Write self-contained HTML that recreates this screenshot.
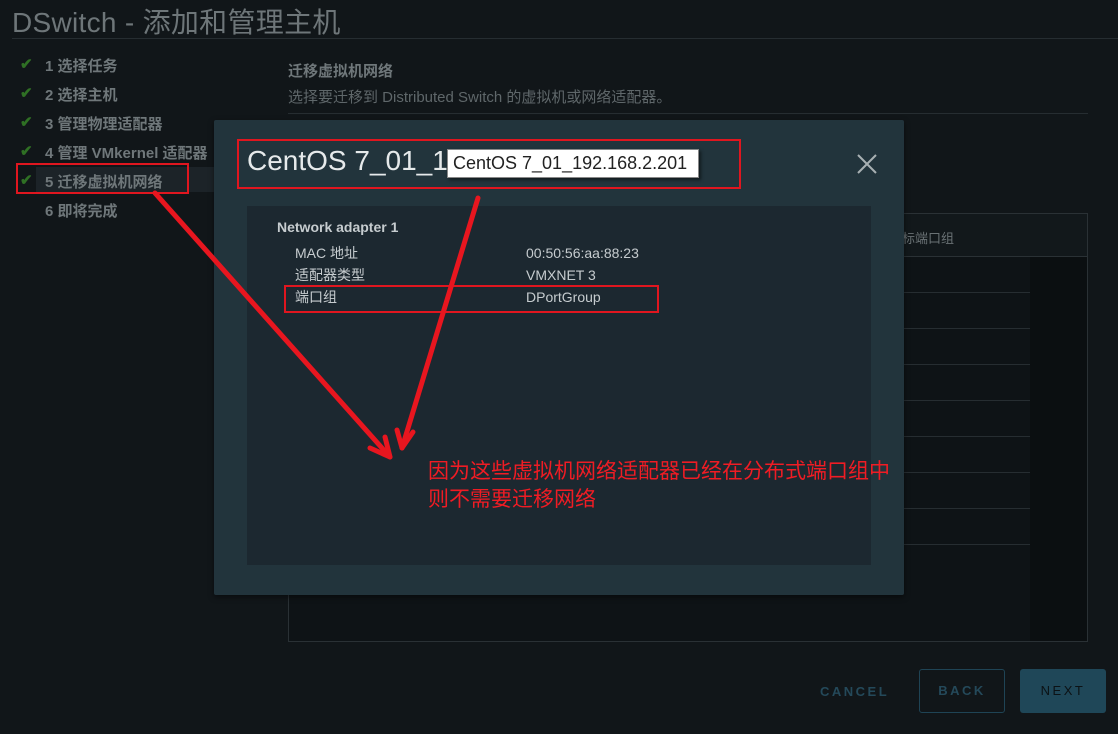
<!DOCTYPE html>
<html><head><meta charset="utf-8"><style>
*{margin:0;padding:0;box-sizing:border-box}
body{width:1118px;height:734px;background:#111619;font-family:"Liberation Sans","Noto Sans CJK SC",sans-serif;position:relative;overflow:hidden;color:#7d8588}
.a{position:absolute}
.step{position:absolute;left:45px;font-size:15px;font-weight:bold;color:#6f777a}
.ck{position:absolute;left:20px;color:#2f7024;font-size:15px;font-weight:bold}
.row{position:absolute;left:288px;width:742px;height:1px;background:#262d31}
</style></head><body>
<div class="a" style="left:12px;top:1px;font-size:28px;color:#6e7679;letter-spacing:0.3px">DSwitch - 添加和管理主机</div>
<div class="a" style="left:12px;top:38px;width:1106px;height:1px;background:#262d31"></div>

<div class="a" style="left:36px;top:167px;width:180px;height:25px;background:#1c2328"></div>
<span class="ck" style="top:55px">✔</span><div class="step" style="top:55px">1 选择任务</div>
<span class="ck" style="top:84px">✔</span><div class="step" style="top:84px">2 选择主机</div>
<span class="ck" style="top:113px">✔</span><div class="step" style="top:113px">3 管理物理适配器</div>
<span class="ck" style="top:142px">✔</span><div class="step" style="top:142px">4 管理 VMkernel 适配器</div>
<span class="ck" style="top:171px">✔</span><div class="step" style="top:171px">5 迁移虚拟机网络</div>
<div class="step" style="top:200px">6 即将完成</div>

<div class="a" style="left:288px;top:60px;font-size:15px;font-weight:bold;color:#6f777a">迁移虚拟机网络</div>
<div class="a" style="left:288px;top:86px;font-size:15px;color:#5f676a">选择要迁移到 Distributed Switch 的虚拟机或网络适配器。</div>
<div class="a" style="left:288px;top:113px;width:800px;height:1px;background:#262d31"></div>

<div class="a" style="left:288px;top:213px;width:800px;height:429px;border:1px solid #2a3135;background:#0e1316"></div>
<div class="a" style="left:289px;top:214px;width:798px;height:43px;background:#12181b;border-bottom:1px solid #2a3135"></div>
<div class="a" style="left:1030px;top:257px;width:57px;height:384px;background:#0b0f11"></div>
<div class="a" style="left:902px;top:228px;font-size:13px;color:#6a7275">标端口组</div>
<div class="row" style="top:292px"></div><div class="row" style="top:328px"></div><div class="row" style="top:364px"></div><div class="row" style="top:400px"></div><div class="row" style="top:436px"></div><div class="row" style="top:472px"></div><div class="row" style="top:508px"></div><div class="row" style="top:544px"></div>

<div class="a" style="left:820px;top:684px;font-size:13px;letter-spacing:2.5px;color:#24495a;font-weight:bold">CANCEL</div>
<div class="a" style="left:919px;top:669px;width:86px;height:44px;border:1px solid #1f4455;border-radius:3px;font-size:13px;letter-spacing:2.5px;color:#24495a;font-weight:bold;text-align:center;line-height:42px">BACK</div>
<div class="a" style="left:1020px;top:669px;width:86px;height:44px;background:#1f4758;border-radius:3px;font-size:13px;letter-spacing:2.5px;color:#0c1215;text-align:center;line-height:44px">NEXT</div>

<div class="a" style="left:214px;top:120px;width:690px;height:475px;background:#22343c;border-radius:2px;box-shadow:0 2px 6px rgba(0,0,0,.5)"></div>
<div class="a" style="left:247px;top:145px;font-size:28px;color:#e6eaeb">CentOS 7_01_1</div>
<div class="a" style="left:447px;top:149px;width:252px;height:29px;background:#fff;border:1px solid #888;box-shadow:2px 2px 3px rgba(0,0,0,.5);font-size:18px;color:#222;padding-left:5px;line-height:27px">CentOS 7_01_192.168.2.201</div>
<div class="a" style="left:237px;top:139px;width:504px;height:50px;border:2px solid #e0161f"></div>
<svg class="a" style="left:856px;top:153px" width="22" height="22"><path d="M2 2L20 20M20 2L2 20" stroke="#a8b0b3" stroke-width="2"/></svg>
<div class="a" style="left:247px;top:206px;width:624px;height:359px;background:#1c2830"></div>
<div class="a" style="left:277px;top:219px;font-size:14px;font-weight:bold;color:#c6cccf">Network adapter 1</div>
<div class="a" style="left:295px;top:242px;font-size:14px;color:#c6cccf;line-height:22px">MAC 地址<br>适配器类型<br>端口组</div>
<div class="a" style="left:526px;top:242px;font-size:14px;color:#c6cccf;line-height:22px">00:50:56:aa:88:23<br>VMXNET 3<br>DPortGroup</div>
<div class="a" style="left:284px;top:285px;width:375px;height:28px;border:2px solid #e0161f"></div>
<div class="a" style="left:16px;top:163px;width:173px;height:31px;border:2px solid #e0161f"></div>
<div class="a" style="left:428px;top:458px;font-size:21px;color:#f01c24;line-height:28px">因为这些虚拟机网络适配器已经在分布式端口组中<br>则不需要迁移网络</div>
<svg class="a" style="left:0;top:0" width="1118" height="734">
<g stroke="#e8161f" stroke-width="5" stroke-linecap="round" fill="none">
<path d="M155 193L390 457"/><path d="M390 457L370 448M390 457L385 437"/>
<path d="M478 198L402 448"/><path d="M402 448L397 430M402 448L413 432"/>
</g></svg>
</body></html>
